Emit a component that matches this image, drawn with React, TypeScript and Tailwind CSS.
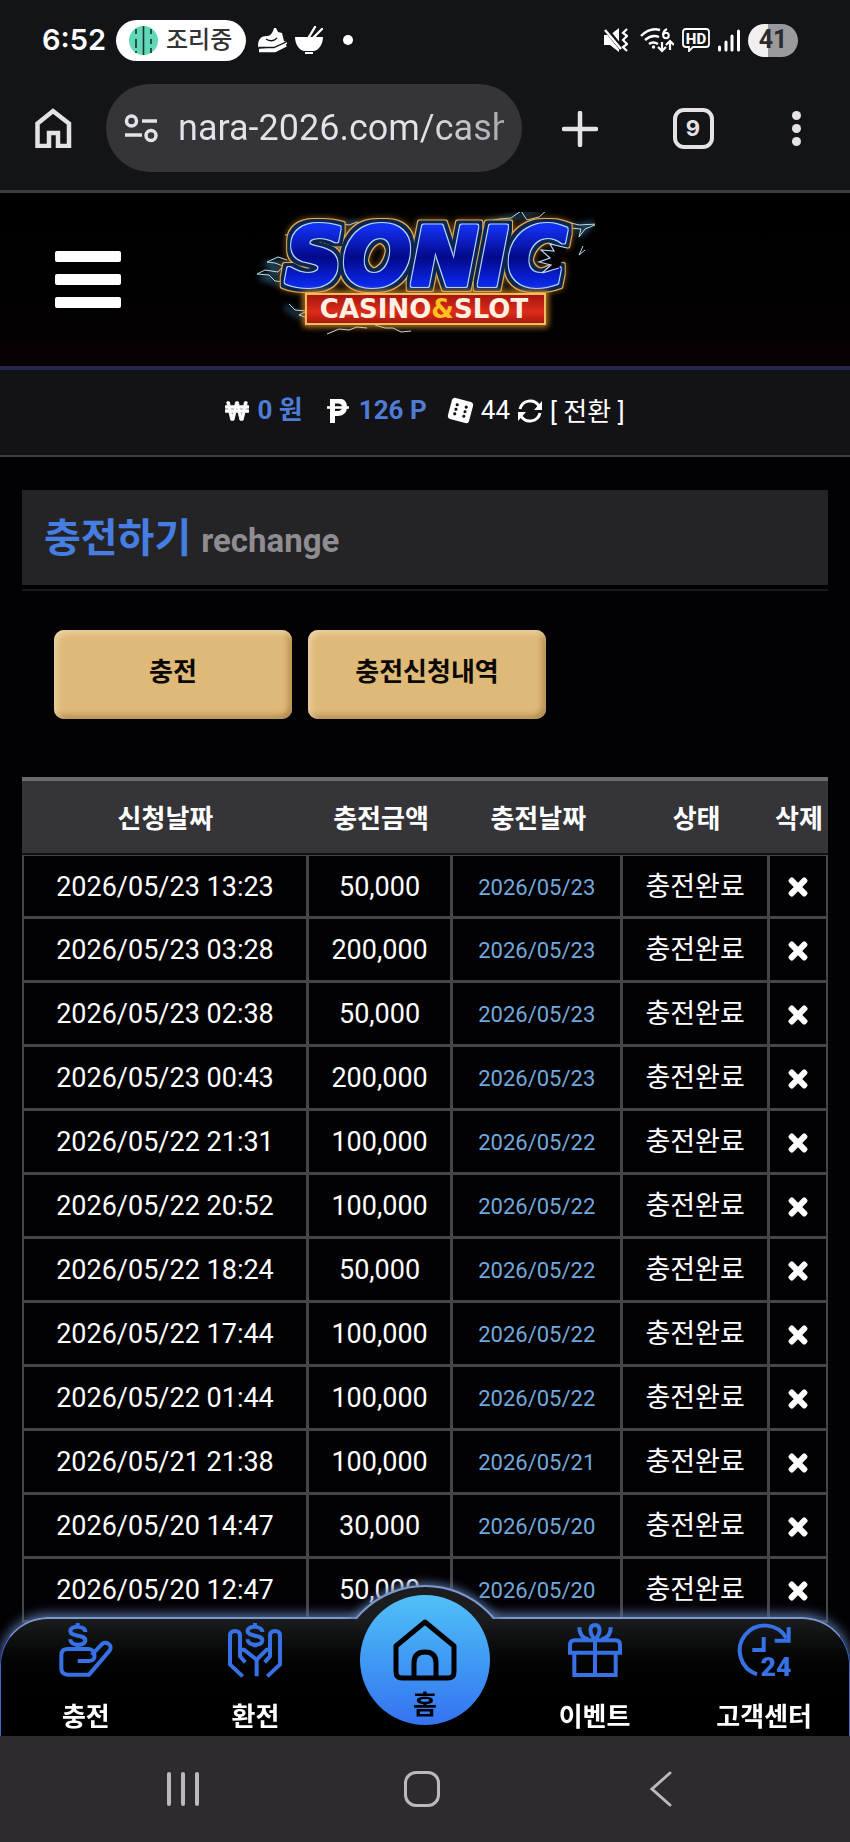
import type { ReactNode } from "react";
import { FaDiceSix, FaTimes, FaWonSign } from "react-icons/fa";

const rows = [
	["2026/05/23 13:23", "50,000", "2026/05/23"],
	["2026/05/23 03:28", "200,000", "2026/05/23"],
	["2026/05/23 02:38", "50,000", "2026/05/23"],
	["2026/05/23 00:43", "200,000", "2026/05/23"],
	["2026/05/22 21:31", "100,000", "2026/05/22"],
	["2026/05/22 20:52", "100,000", "2026/05/22"],
	["2026/05/22 18:24", "50,000", "2026/05/22"],
	["2026/05/22 17:44", "100,000", "2026/05/22"],
	["2026/05/22 01:44", "100,000", "2026/05/22"],
	["2026/05/21 21:38", "100,000", "2026/05/21"],
	["2026/05/20 14:47", "30,000", "2026/05/20"],
	["2026/05/20 12:47", "50,000", "2026/05/20"]
];

function StatusBar() {
	return (
		<div className="flex h-20 items-center justify-between pl-[42px] pr-[52px] text-white">
			<div className="flex items-center">
				<span className="w-[74px] font-['Inter','Noto_Sans_CJK_KR',sans-serif] text-[29px] font-semibold">
					6:52
				</span>
				<span className="flex h-[41px] items-center gap-2 rounded-full bg-white pl-[13px] pr-[14px] text-2xl font-medium text-[#333]">
					<svg viewBox="0 0 29 29" className="size-[29px]">
						<circle cx="14.5" cy="14.5" r="14.5" fill="#62d8b8" />
						<path
							d="M14.5 0v29M7 3v5M7 13v9M7 25v2M22 3v5M22 13v5M22 22v5"
							stroke="#17332e"
							strokeWidth="1.6"
						/>
					</svg>
					조리중
				</span>
				<svg viewBox="0 0 29 26" className="ml-3 h-[26px] w-[29px]" fill="#fff">
					<path d="M0 19C0 12 3 9 9 9q4 0 6-5l1-3 2 0 2 4 4 1 2 8 3 1v2l-12 6-16-2z" />
					<path d="M1 23.500h16l11-5.500" fill="none" stroke="#fff" strokeWidth="3.500" />
					<path d="M1 20.500h15l13-6M8 12q6 4 11-1" fill="none" stroke="#131418" strokeWidth="1.300" />
				</svg>
				<svg viewBox="0 0 28 28" className="ml-2 h-7 w-7" fill="#fff">
					<path d="M0 11h28c0 7-4 13-9 14H9C4 24 0 18 0 11zM10 26h8v2h-8z" />
					<path d="M14 11l6-10M18 12l9-9" stroke="#fff" strokeWidth="2.4" strokeLinecap="round" />
				</svg>
				<span className="ml-5 size-[10px] rounded-full bg-white" />
			</div>
			<div className="flex items-center gap-2">
				<svg viewBox="0 0 24 24" className="mr-1 size-6">
					<path d="M0 7h6l9-7v24l-9-7H0z" fill="#fff" />
					<path d="M1 0l17 21" stroke="#131418" strokeWidth="5" />
					<path d="M1 2l16 19" stroke="#fff" strokeWidth="2.4" />
					<path
						d="M23 1l-4 4 4 3-4 4 4 4-4 3 4 4"
						fill="none"
						stroke="#fff"
						strokeWidth="2.2"
					/>
				</svg>
				<svg viewBox="0 0 34 25" className="h-[25px] w-[34px]" fill="none" stroke="#fff" strokeWidth="2.4">
					<path d="M1 8Q10-1 20 2M5 12q7-6 14-3M9 16q4-3 9 0" />
					<circle cx="13.500" cy="19" r="1.700" fill="#fff" stroke="none" />
					<path d="M27 1q-4 2-4 6" strokeWidth="2" />
					<circle cx="26" cy="7.500" r="2.800" strokeWidth="2" />
					<path d="M22 14v9m-4-4l4 4 4-4M30 22v-8m-4 3l4-4 4 4" strokeWidth="2.2" />
				</svg>
				<svg viewBox="0 0 28 24" className="h-6 w-7">
					<path
						d="M4 1h20q3 0 3 3v12q0 3-3 3H11l-4 4v-4H4q-3 0-3-3V4q0-3 3-3z"
						fill="none"
						stroke="#fff"
						strokeWidth="1.800"
					/>
					<text
						x="14"
						y="15.500"
						textAnchor="middle"
						fontFamily="Roboto, sans-serif"
						fontSize="15"
						fontWeight="800"
						fill="#fff"
					>
						HD
					</text>
				</svg>
				<svg viewBox="0 0 22 23" className="h-[23px] w-[22px]">
					<path
						d="M1.500 18v3M8 13v8M14 7v14M20.500 2v19"
						stroke="#fff"
						strokeWidth="3"
						strokeLinecap="round"
					/>
				</svg>
				<span className="flex h-[33px] w-[50px] items-center justify-center rounded-full bg-linear-to-r from-[#f0f0f2] from-40% to-[#9a9a9e] to-40% font-['Roboto',sans-serif] text-[25px] font-bold text-[#2b2b2e]">
					41
				</span>
			</div>
		</div>
	);
}

function BrowserBar() {
	return (
		<div className="flex h-[113px] items-start border-b-3 border-[#3c3b3f] pr-[45px] pl-[34px] pt-1 text-[#e4e2e7]">
			<button aria-label="홈페이지" className="mt-6">
				<svg viewBox="0 0 38 40" className="h-10 w-[38px]" fill="none" stroke="currentColor" strokeWidth="4.500">
					<path d="M3.500 38V15.500L19 3l16 12.500V38H24V25H15v13z" />
				</svg>
			</button>
			<div className="ml-[34px] flex h-[88px] flex-1 items-center overflow-hidden rounded-full bg-[#353439] pr-[18px] pl-[18px]">
				<svg viewBox="0 0 34 30" className="h-[30px] w-[34px] shrink-0" fill="none" stroke="currentColor" strokeWidth="3.500">
					<circle cx="7.500" cy="8" r="5" />
					<path d="M18 8h15M1 22h17" />
					<circle cx="27" cy="22.500" r="5" />
				</svg>
				<input
					aria-label="주소"
					readOnly
					defaultValue="nara-2026.com/cash"
					className="ml-5 min-w-0 flex-1 bg-linear-to-r from-[#e4e2e7] from-75% to-[#a9a8ad] bg-clip-text font-['Roboto',sans-serif] text-4xl text-transparent outline-none"
				/>
			</div>
			<div className="ml-10 mt-6 flex w-[243px] items-center justify-between">
				<button aria-label="새 탭">
					<svg viewBox="0 0 36 36" className="size-9" stroke="currentColor" strokeWidth="4.500" strokeLinecap="round">
						<path d="M18 2v32M2 18h32" />
					</svg>
				</button>
				<button
					aria-label="탭 9개"
					className="flex size-[41px] items-center justify-center rounded-[11px] border-4 border-current font-['Inter',sans-serif] text-[22px] font-bold"
				>
					9
				</button>
				<button aria-label="메뉴" className="flex w-[17px] flex-col items-center gap-1">
					<span className="size-[9px] rounded-full bg-current" />
					<span className="size-[9px] rounded-full bg-current" />
					<span className="size-[9px] rounded-full bg-current" />
				</button>
			</div>
		</div>
	);
}

function Logo() {
	return (
		<svg viewBox="0 0 340 136" className="h-[136px] w-[340px]" role="img" aria-label="SONIC CASINO&SLOT">
			<defs>
				<linearGradient id="letter" gradientUnits="userSpaceOnUse" x1="0" y1="15" x2="0" y2="76">
					<stop offset="0" stopColor="#1230f0" />
					<stop offset="0.5" stopColor="#04088a" />
					<stop offset="1" stopColor="#0a2cf5" />
				</linearGradient>
				<linearGradient id="banner" x1="0" y1="0" x2="0" y2="1">
					<stop offset="0" stopColor="#a3150f" />
					<stop offset="0.6" stopColor="#dc2c1a" />
					<stop offset="1" stopColor="#a8160d" />
				</linearGradient>
				<filter id="glow" x="-20%" y="-30%" width="140%" height="160%">
					<feGaussianBlur stdDeviation="3" />
				</filter>
				{/* neon edge, navy rim, gold rim and halo, from the inside out */}
				<filter id="rims" x="-10%" y="-30%" width="120%" height="160%" colorInterpolationFilters="sRGB">
					<feMorphology in="SourceAlpha" operator="dilate" radius="1.200" result="a1" />
					<feMorphology in="SourceAlpha" operator="dilate" radius="3.600" result="a2" />
					<feMorphology in="SourceAlpha" operator="dilate" radius="5" result="a3" />
					<feGaussianBlur in="a3" stdDeviation="3" result="a4" />
					<feFlood floodColor="#b4d6ff" />
					<feComposite in2="a1" operator="in" result="c1" />
					<feFlood floodColor="#0b2550" />
					<feComposite in2="a2" operator="in" result="c2" />
					<feFlood floodColor="#e3ab52" />
					<feComposite in2="a3" operator="in" result="c3" />
					<feFlood floodColor="#b87a20" floodOpacity="0.7" />
					<feComposite in2="a4" operator="in" result="c4" />
					<feMerge>
						<feMergeNode in="c4" />
						<feMergeNode in="c3" />
						<feMergeNode in="c2" />
						<feMergeNode in="c1" />
						<feMergeNode in="SourceGraphic" />
					</feMerge>
				</filter>
			</defs>
			<g fill="none" stroke="#4b8fc0" strokeWidth="4" opacity="0.6" filter="url(#glow)">
				<path d="M28 50L12 52 24 60 8 66 26 72M30 94l10 8 8 2M86 12l14-1 12 4M230 12l24-6 14-2 20-10M304 18l32-6-12 12" />
			</g>
			<g fill="none" stroke="#b7e2ec" strokeWidth="1">
				<path d="M32 48l-9-3-11 5 8 1 8 3-5 6-13-2-8 4 12 1 6 6 10 1M34 92l6 6 12 1-8 4 12 4M80 16l8-4 6 1 8-3 10 3 14-1-12-3-8 1M44 22l-14 1M220 15l10-5 14-3 12-1 10-7 6 9 12-3 8-7 12-4 6-4M306 12l10-1 8 2 18-1-12 5-6 8 2-8-12-1M328 34l-4 9 6-5M72 122l12-5 10 1 8-3 10 1M120 113l10 3 8 0 8 4 10-1" />
			</g>
			<text
				x="171"
				y="73"
				textAnchor="middle"
				fontFamily="DejaVu Sans, sans-serif"
				fontSize="80"
				fontWeight="700"
				fontStyle="italic"
				fill="url(#letter)"
				stroke="url(#letter)"
				strokeWidth="4"
				strokeLinejoin="round"
				filter="url(#rims)"
			>
				SONIC
			</text>
			{/* jagged bite in the mouth of the C */}
			<path
				d="M312 36l-17-4 4 7-13-1 9 8-11 4 12 3-9 8 17-5"
				fill="#050308"
				stroke="#b4d6ff"
				strokeWidth="1.200"
			/>
			<rect x="51" y="82" width="239" height="30" fill="none" stroke="#f0a030" strokeWidth="5" filter="url(#glow)" />
			<rect x="51" y="82" width="239" height="30" fill="url(#banner)" stroke="#f2bb5c" strokeWidth="2" />
			<text
				x="169"
				y="106"
				textAnchor="middle"
				fontFamily="DejaVu Sans, sans-serif"
				fontSize="26"
				fontWeight="700"
				fill="#fff1e2"
			>
				CASINO<tspan fill="#ffc21f">&amp;</tspan>SLOT
			</text>
		</svg>
	);
}

function SiteHeader() {
	return (
		<header>
			<div className="grid h-[177px] grid-cols-[1fr_340px_1fr] items-center border-b-4 border-[#26264c] bg-linear-to-b from-black to-[#080103]">
				<button aria-label="전체 메뉴" className="ml-[55px] flex w-[66px] flex-col gap-3">
					<span className="h-[11px] rounded-xs bg-white" />
					<span className="h-[11px] rounded-xs bg-white" />
					<span className="h-[11px] rounded-xs bg-white" />
				</button>
				<a href="#">
					<Logo />
				</a>
			</div>
			<div className="flex h-[87px] items-center justify-center border-b-2 border-[#3e3d40] bg-[#131216] pb-1 text-[26px]">
				<FaWonSign className="size-6" stroke="#fff" strokeWidth="20" />
				<span className="ml-2 font-bold text-[#4f7dd6]">0 원</span>
				<svg viewBox="0 0 22 24" className="ml-6 h-6 w-[22px]" fill="none" stroke="#fff">
					<path d="M5.500 24V2H11q6.500 0 6.500 6T11 14.500H6" strokeWidth="5" />
					<path d="M0 8.500h22" strokeWidth="2.600" />
				</svg>
				<span className="ml-[10px] font-bold text-[#4f7dd6]">126 P</span>
				<FaDiceSix className="ml-[21px] size-[25px] rotate-15" />
				<span className="ml-2">44</span>
				<svg viewBox="0 0 24 24" className="ml-2 size-6" fill="none" stroke="#fff" strokeWidth="3">
					<path d="M2 10C4 1 16-1 21 7M22 14c-2 9-14 11-19 3" />
					<path d="M24 2v9h-8zM0 22v-9h8z" fill="#fff" stroke="none" />
				</svg>
				<button className="ml-2 pt-1">[ 전환 ]</button>
			</div>
		</header>
	);
}

function GoldButton({ children }: { children: ReactNode }) {
	return (
		<button className="h-[89px] w-[238px] rounded-[10px] bg-[#dfb978] pb-1 text-[26px] font-bold text-[#0b0905] shadow-[inset_3px_3px_6px_#ecd3a6,inset_-3px_-3px_6px_#a98445]">
			{children}
		</button>
	);
}

function HistoryTable() {
	return (
		<table className="mt-[58px] w-full table-fixed border-separate border-spacing-0 border-t-4 border-[#6a696c] text-center text-[26px]">
			<colgroup>
				<col className="w-[35.6%]" />
				<col className="w-[17.9%]" />
				<col className="w-[21.1%]" />
				<col className="w-[18.2%]" />
				<col className="w-[7.2%]" />
			</colgroup>
			<thead>
				<tr className="h-[74px] bg-[#353438] font-bold">
					{["신청날짜", "충전금액", "충전날짜", "상태", "삭제"].map((name) => (
						<th key={name} className="border-b-2 border-[#111014] p-0 pt-1 whitespace-nowrap">
							{name}
						</th>
					))}
				</tr>
			</thead>
			<tbody className="text-[27px]">
				{rows.map(([applied, amount, charged]) => (
					<tr
						key={applied}
						className="h-16 *:border-r-3 *:border-b-3 *:border-[#454447] *:p-0 *:pt-[2px] *:first:border-l-2 *:last:border-r-2 first:*:border-t"
					>
						<td>{applied}</td>
						<td>{amount}</td>
						<td className="text-[22px] text-[#72a9dc]">{charged}</td>
						<td>충전완료</td>
						<td>
							<button aria-label="삭제" className="block w-full">
								<FaTimes className="mx-auto size-[26px]" stroke="#fff" strokeWidth="24" />
							</button>
						</td>
					</tr>
				))}
			</tbody>
		</table>
	);
}

function ChargeIcon() {
	return (
		<>
			<path d="M79 27C79 8 34 6 34 24c0 19 45 9 45 28S34 70 34 49M56 0v12M56 62v18" />
			<path d="M56 114h35c24 0 18-36-2-36H26Q7 78 7 97v39q0 19 19 19h64l62-72c11-17-12-31-24-19l-30 32" />
		</>
	);
}

function ExchangeIcon() {
	return (
		<>
			<path d="M103 27C103 8 59 6 59 24c0 19 44 9 44 28S59 70 59 49M81 0v12M81 60v13" />
			<path d="M44 160L6 124V38q0-14 15-14t15 14v62l16 18M36 80h12l38 30v50" />
			<path d="M118 160l38-36V38q0-14-15-14t-15 14v62l-16 18M126 80h-10l-30 30" />
		</>
	);
}

function GiftIcon() {
	return (
		<>
			<path d="M6 89V66q0-14 14-14h122q14 0 14 14v23zM19 89v67h124V89M81 48v108" />
			<path d="M81 50C62 30 64 6 81 6s19 24 0 44M34 13c0 20 10 34 28 36M128 13c0 20-10 34-28 36" />
		</>
	);
}

function SupportIcon() {
	return (
		<>
			<path d="M60 154A75 75 0 1 1 148 45M155 13v40h-42M80 42v39H46" />
			<text
				x="117"
				y="160"
				textAnchor="middle"
				fontFamily="Roboto, sans-serif"
				fontSize="80"
				fontWeight="900"
				fill="currentColor"
				stroke="none"
			>
				24
			</text>
		</>
	);
}

function TabItem({ label, children }: { label: string; children: ReactNode }) {
	return (
		<a href="#" className="flex flex-col items-center pt-1">
			<svg
				viewBox="0 0 162 162"
				className="size-[54px] overflow-visible text-[#3672e6]"
				fill="none"
				stroke="currentColor"
				strokeWidth="12"
			>
				{children}
			</svg>
			<span className="mt-6 text-[26px] leading-8 font-bold">{label}</span>
		</a>
	);
}

function TabBar() {
	return (
		<nav className="relative grid h-[119px] grid-cols-5 rounded-t-[48px] border-x border-t-2 border-x-[#3b66c0] border-t-[#7b98cf] bg-linear-to-b from-[#1b1c1d] to-black to-70% shadow-[0_-3px_12px_#56709f]">
			{/* hump behind the home button */}
			<div className="absolute -top-[46px] left-1/2 h-[46px] w-[190px] -translate-x-1/2 overflow-hidden">
				<div className="mx-auto mt-3 size-[180px] rounded-full border-2 border-[#7b98cf] bg-[#1b1c1d] shadow-[0_-2px_10px_#56709f]" />
			</div>
			<TabItem label="충전">
				<ChargeIcon />
			</TabItem>
			<TabItem label="환전">
				<ExchangeIcon />
			</TabItem>
			<a
				href="#"
				className="relative -mt-6 flex size-[130px] flex-col items-center justify-self-center rounded-full bg-linear-to-b from-[#52c0f7] to-[#3572f0] pt-6 text-black"
			>
				<svg viewBox="0 0 64 62" className="h-[62px] w-16" fill="none" stroke="currentColor" strokeWidth="5" strokeLinejoin="round">
					<path d="M3 27L32 3l29 24v26q0 6-6 6H9q-6 0-6-6z" />
					<path d="M21 59V44q0-11 11-11t11 11v15" />
				</svg>
				<span className="mt-2 text-[26px] leading-8 font-bold">홈</span>
			</a>
			<TabItem label="이벤트">
				<GiftIcon />
			</TabItem>
			<TabItem label="고객센터">
				<SupportIcon />
			</TabItem>
		</nav>
	);
}

function SystemNav() {
	return (
		<div className="relative grid h-[106px] grid-cols-3 items-center justify-items-center bg-[#2e2a2f] pr-[70px] pl-16 text-[#bcb8bd]">
			<button aria-label="최근 앱" className="flex h-[34px] w-8 justify-between">
				<span className="w-1 rounded-full bg-current" />
				<span className="w-1 rounded-full bg-current" />
				<span className="w-1 rounded-full bg-current" />
			</button>
			<button aria-label="홈 화면" className="size-9 rounded-xl border-3 border-current" />
			<button aria-label="뒤로">
				<svg viewBox="0 0 22 36" className="h-9 w-[22px]" fill="none" stroke="currentColor" strokeWidth="3" strokeLinecap="round">
					<path d="M20 2L2 18l18 16" />
				</svg>
			</button>
		</div>
	);
}

export default function App() {
	return (
		<div className="min-h-screen bg-[#020104] font-['Roboto','Noto_Sans_CJK_KR',sans-serif] text-white">
			<div className="bg-[#131418]">
				<StatusBar />
				<BrowserBar />
			</div>
			<SiteHeader />
			<main className="px-[22px] pt-[33px]">
				<div className="border-b-2 border-[#19181b] pb-1">
					<h1 className="flex h-[95px] items-baseline gap-[10px] bg-[#242326] px-[22px] pt-6 text-[40px] leading-[50px] font-bold text-[#467de0]">
						충전하기
						<small className="text-[33px] text-[#8f8d92]">rechange</small>
					</h1>
				</div>
				<div className="mt-[39px] flex gap-4 px-8">
					<GoldButton>충전</GoldButton>
					<GoldButton>충전신청내역</GoldButton>
				</div>
				<HistoryTable />
			</main>
			<div className="fixed inset-x-0 bottom-0">
				<TabBar />
				<SystemNav />
			</div>
		</div>
	);
}
